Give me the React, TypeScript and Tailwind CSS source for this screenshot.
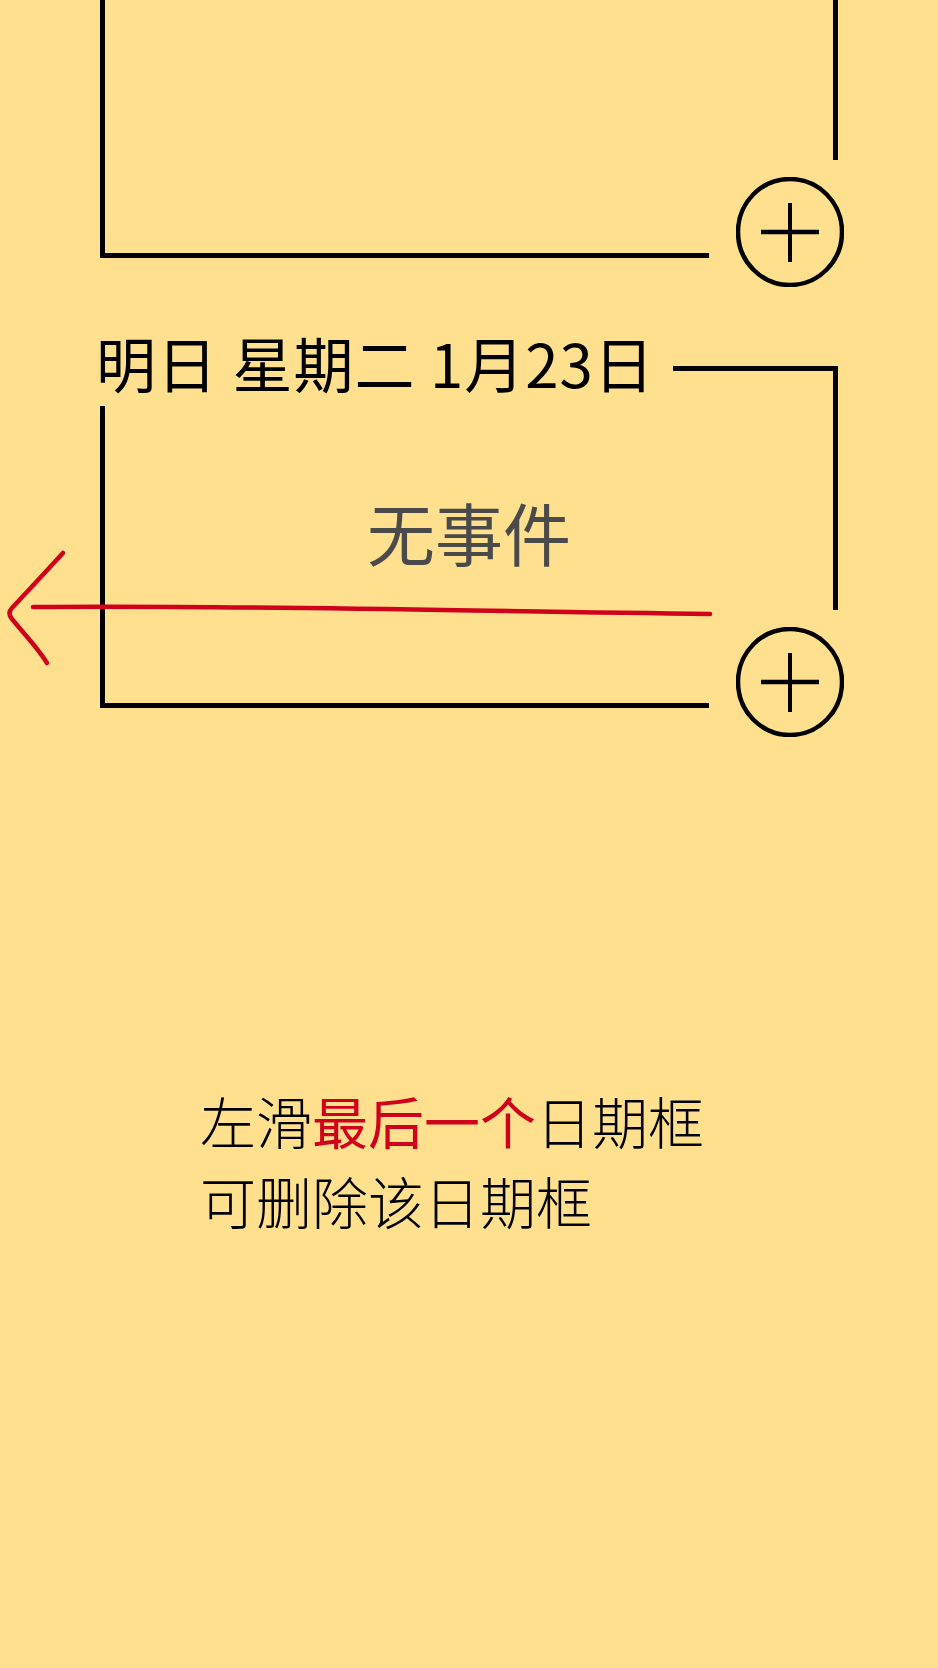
import React from "react";

const CJK = { fontFamily: '"Noto Sans CJK SC", "Noto Sans", sans-serif' };

function AddButton() {
  // circled plus at the bottom-right corner of a day box
  return (
    <svg width="108" height="110" viewBox="0 0 108 110" className="shrink-0 ml-[27px] mt-[17px]">
      <ellipse cx="54" cy="55" rx="52" ry="53" fill="none" stroke="#000" strokeWidth="4.5" />
      <line x1="54" y1="26" x2="54" y2="85" stroke="#000" strokeWidth="4" />
      <line x1="25" y1="55" x2="83" y2="55" stroke="#000" strokeWidth="4.5" />
    </svg>
  );
}

function BoxBottom() {
  return (
    <div className="h-[98px] flex items-start">
      <div className="shrink-0 mt-[93px] w-[604px] h-[5px] bg-black" />
      <AddButton />
    </div>
  );
}

export default function App() {
  return (
    <div className="relative w-[938px] h-[1668px] overflow-hidden bg-[#FFE08F]" style={CJK}>
      {/* Previous day box, cut off at the top */}
      <div className="ml-[100px] w-[738px]">
        <div className="border-l-[5px] border-black">
          <div className="h-[160px] border-r-[5px] border-black" />
          <BoxBottom />
        </div>
      </div>

      {/* Tomorrow box */}
      <div className="ml-[100px] w-[738px] mt-[74px]">
        <div className="flex items-start">
          <span className="-ml-1 shrink-0 text-[60px] leading-[60px] tracking-[1px] text-black whitespace-pre">
            明日 星期二 1月23日
          </span>
          <div className="flex-1 ml-[18px] mt-[34px] h-[40px] border-t-[5px] border-r-[5px] border-black" />
        </div>
        <div className="border-l-[5px] border-black">
          <div className="h-[204px] border-r-[5px] border-black pt-[92px] flex justify-center">
            <span className="text-[68px] leading-[68px] text-[#4a4a4a]">无事件</span>
          </div>
          <BoxBottom />
        </div>
      </div>

      {/* Hint */}
      <div className="ml-[200px] mt-[372px] text-[56px] leading-[80px] font-light text-black">
        <p>
          左滑<span className="text-[#D0021B] font-normal">最后一个</span>日期框
        </p>
        <p>可删除该日期框</p>
      </div>

      {/* Swipe-left gesture arrow over the box */}
      <svg
        className="absolute left-0 top-[540px] pointer-events-none"
        width="720"
        height="140"
        viewBox="0 0 720 140"
      >
        <path
          d="M33 67 C 250 65, 450 71, 710 74"
          fill="none"
          stroke="#D0021B"
          strokeWidth="4.5"
          strokeLinecap="round"
        />
        <path
          d="M63 13 C 42 36, 22 57, 12 68 Q 7 73 12 79 C 25 95, 38 108, 47 123"
          fill="none"
          stroke="#D0021B"
          strokeWidth="4.5"
          strokeLinecap="round"
        />
      </svg>
    </div>
  );
}
